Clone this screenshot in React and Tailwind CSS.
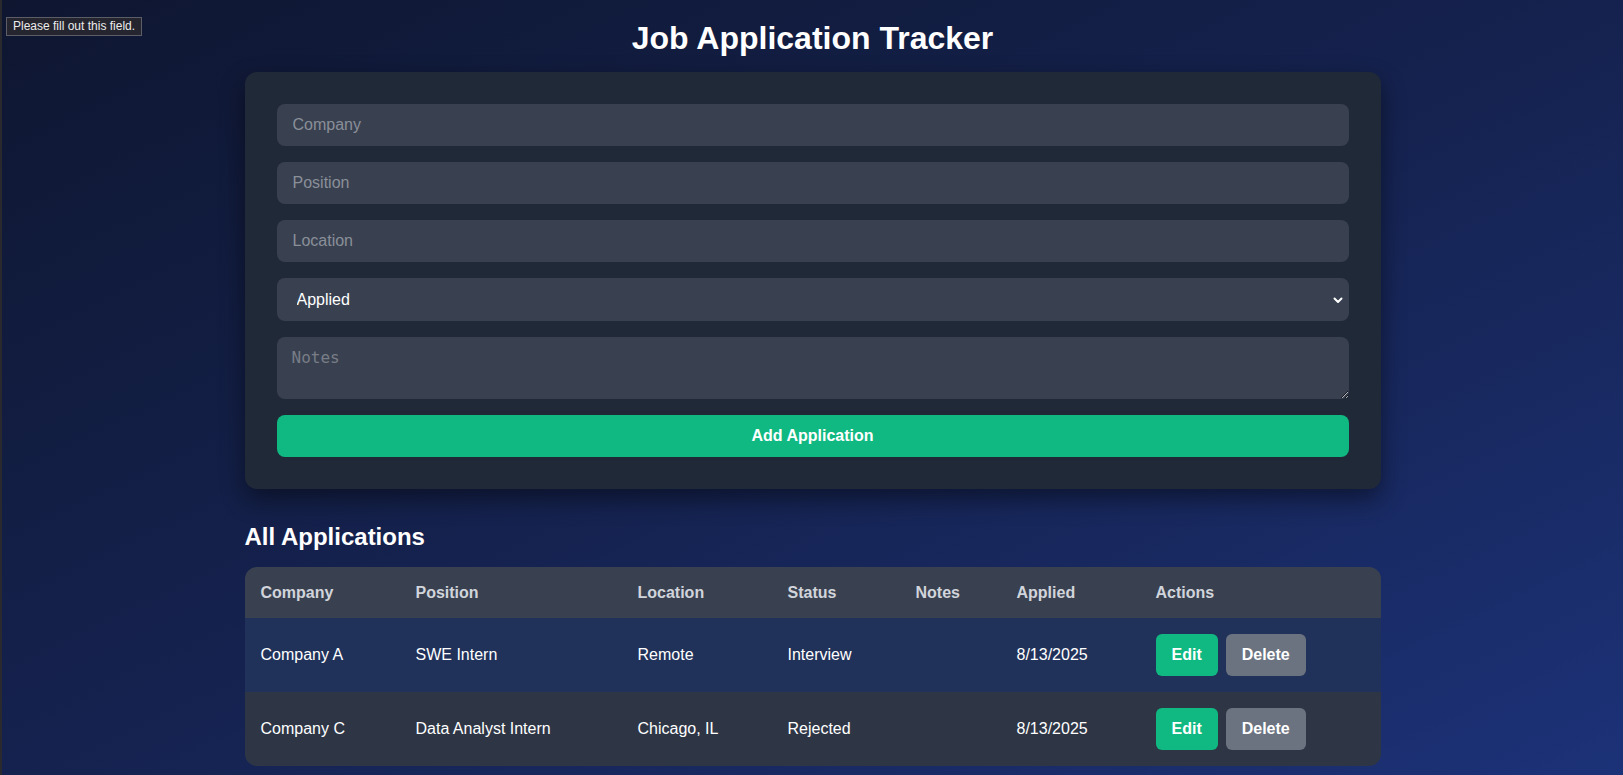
export default function App() {
  const rows = [
    { company: "Company A", position: "SWE Intern", location: "Remote", status: "Interview", notes: "", applied: "8/13/2025", bg: "bg-[#21325a]" },
    { company: "Company C", position: "Data Analyst Intern", location: "Chicago, IL", status: "Rejected", notes: "", applied: "8/13/2025", bg: "bg-[#2e3646]" },
  ];
  const cols = "grid grid-cols-[155px_222px_150px_128px_101px_139px_241px]";
  const headers = ["Company", "Position", "Location", "Status", "Notes", "Applied", "Actions"];

  return (
    <div className="relative min-h-screen w-full bg-linear-to-br from-[#0e1630] via-[#15224f] to-[#1c3278] font-['Liberation_Sans',Arial,sans-serif] text-white border-l-2 border-[#2a2a2e]">
      <div className="absolute left-[4px] top-[17px] border border-[#5c5d66] bg-[#24252e] px-[6px] py-[2px] text-[12px] leading-[13px] text-[#ececec]">
        Please fill out this field.
      </div>

      <div className="mx-auto flex w-[1136px] flex-col pt-5">
        <h1 className="mb-4 text-center text-[32px] font-bold leading-9">Job Application Tracker</h1>

        <div className="flex flex-col gap-4 rounded-xl bg-[#202938] p-8 shadow-[0_10px_25px_rgba(0,0,0,0.45)]">
          <input
            className="h-[42px] w-full rounded-lg bg-[#394151] px-4 text-base text-white outline-none placeholder:text-[#8a8f98]"
            placeholder="Company"
          />
          <input
            className="h-[42px] w-full rounded-lg bg-[#394151] px-4 text-base text-white outline-none placeholder:text-[#8a8f98]"
            placeholder="Position"
          />
          <input
            className="h-[42px] w-full rounded-lg bg-[#394151] px-4 text-base text-white outline-none placeholder:text-[#8a8f98]"
            placeholder="Location"
          />
          <div className="relative h-[43px] w-full">
            <select className="h-full w-full appearance-none rounded-lg bg-[#394151] pl-5 pr-10 text-base text-white outline-none">
              <option>Applied</option>
              <option>Interview</option>
              <option>Offer</option>
              <option>Rejected</option>
            </select>
            <svg
              className="pointer-events-none absolute right-[5px] top-1/2 -translate-y-1/2"
              width="12"
              height="12"
              viewBox="0 0 12 12"
              fill="none"
            >
              <path d="M2.5 4.5 L6 8 L9.5 4.5" stroke="white" strokeWidth="2" strokeLinecap="round" strokeLinejoin="round" />
            </svg>
          </div>
          <textarea
            className="h-[62px] w-full rounded-lg bg-[#394151] px-[15px] py-[9px] font-['DejaVu_Sans_Mono',monospace] text-base leading-6 text-white outline-none placeholder:text-[#787d86]"
            placeholder="Notes"
          />
          <button className="h-[42px] w-full rounded-lg bg-[#10b981] text-base font-bold text-white">
            Add Application
          </button>
        </div>

        <h2 className="mb-[14px] mt-8 text-2xl font-bold leading-8">All Applications</h2>

        <div className="overflow-hidden rounded-xl">
          <div className={`${cols} h-[51px] items-center bg-[#394151] text-base font-bold text-[#d1d5db]`}>
            {headers.map((h) => (
              <div key={h} className="px-4">{h}</div>
            ))}
          </div>
          {rows.map((r, i) => (
            <div key={i} className={`${cols} ${r.bg} h-[74px] items-center text-base text-white`}>
              <div className="px-4">{r.company}</div>
              <div className="px-4">{r.position}</div>
              <div className="px-4">{r.location}</div>
              <div className="px-4">{r.status}</div>
              <div className="px-4">{r.notes}</div>
              <div className="px-4">{r.applied}</div>
              <div className="flex gap-2 px-4">
                <button className="h-[42px] rounded-md bg-[#10b981] px-4 font-bold text-white">Edit</button>
                <button className="h-[42px] rounded-md bg-[#6b7280] px-4 font-bold text-white">Delete</button>
              </div>
            </div>
          ))}
        </div>
      </div>
    </div>
  );
}
